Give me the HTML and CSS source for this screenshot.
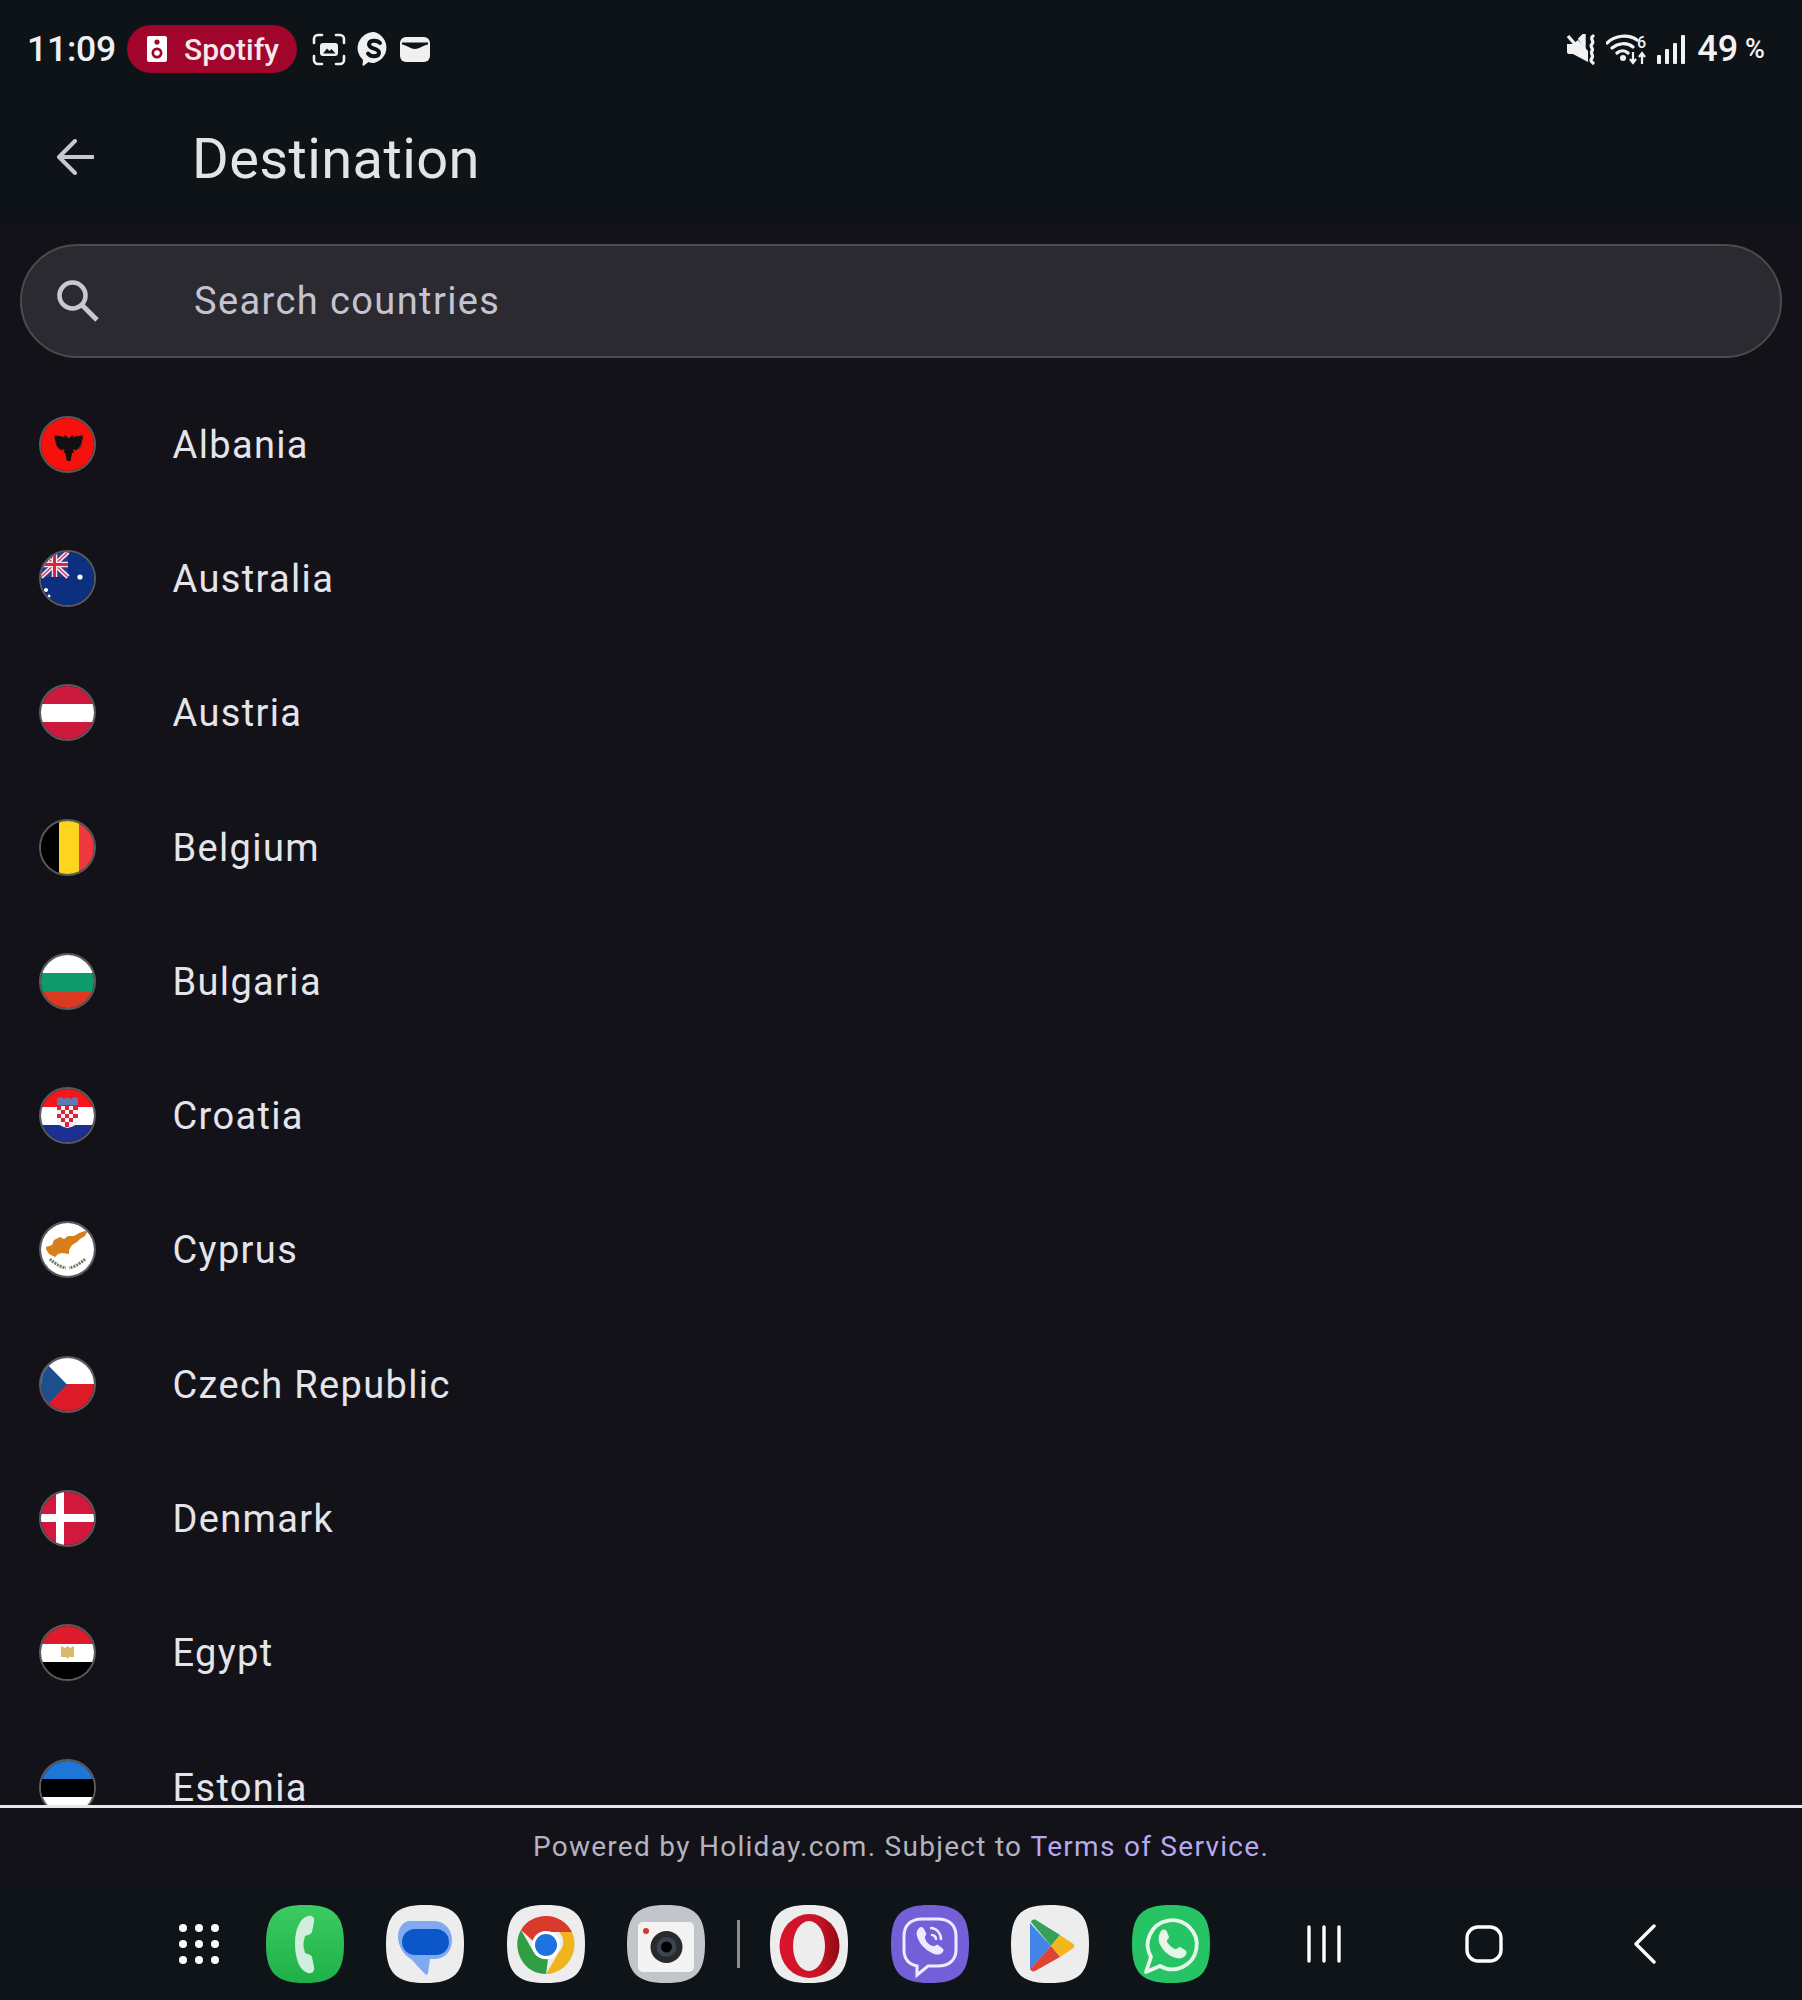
FILE: index.html
```html
<!DOCTYPE html>
<html lang="en">
<head>
<meta charset="utf-8">
<title>Destination</title>
<link rel="stylesheet" href="styles.css">
</head>
<body>
<div class="app">
  <header class="top">
    <div class="status">
      <div class="status-left">
        <span class="time">11:09</span>
        <span class="pill">
          <svg width="20" height="26" viewBox="0 0 20 26"><rect width="20" height="26" rx="2" fill="#fff"/><circle cx="10" cy="6" r="2.6" fill="#a1052c"/><circle cx="10" cy="17" r="5.5" fill="#a1052c"/><circle cx="10" cy="17" r="2.8" fill="#fff"/></svg>
          <span>Spotify</span>
        </span>
        <svg class="ic-shot" width="34" height="33" viewBox="0 0 34 33" fill="none"><path d="M2 10V6a4 4 0 0 1 4-4h4M24 2h4a4 4 0 0 1 4 4v4M32 23v4a4 4 0 0 1-4 4h-4M10 31H6a4 4 0 0 1-4-4v-4" stroke="#f0f0f0" stroke-width="2.6" stroke-linecap="round"/><rect x="8" y="10" width="18" height="13" rx="3" fill="#f0f0f0"/><path d="M11 20.500l4-5 2.500 2.500 2-2 4 4.500z" fill="#0e1318"/></svg>
        <svg class="ic-sk" width="34" height="34" viewBox="0 0 34 34"><path d="M17 0a16.500 16 0 0 1 0 31c-2 0-4-.4-5.500-1L7 33.500c-.8.500-1.600 0-1.500-1l.5-4.500A16 16 0 0 1 17 0z" fill="#f0f0f0"/><path d="M23 11C20 7.500 12 8 12 12.500c0 5 10.500 3.500 10 8.500-.4 4-8 4.500-11 .5" fill="none" stroke="#0e1318" stroke-width="4" stroke-linecap="round"/></svg>
        <svg class="ic-wal" width="30" height="25" viewBox="0 0 30 25"><rect width="30" height="25" rx="6" fill="#f0f0f0"/><path d="M2 5.500h26v2C22 9 19 12 15 12S8 9 2 7.500z" fill="#0e1318"/></svg>
      </div>
      <div class="status-right">
        <svg width="31" height="31" viewBox="0 0 31 31"><path d="M1 10h6l5-4 10 11v11L7 20H3a2 2 0 0 1-2-2z" fill="#f2f2f2"/><path d="M14 5l4-4v10zM2 2l19 22" stroke="#f2f2f2" stroke-width="3.400" fill="#f2f2f2"/><path d="M27 2c-4 3 2 5-1 8s2 4 0 7 2 4 0 7-1 3 1 5" fill="none" stroke="#f2f2f2" stroke-width="3.200" stroke-linecap="round"/></svg>
        <svg class="ic-wifi" width="42" height="31" viewBox="0 0 42 31"><path d="M1 9c8-8 22-9 30-3M6 14c6-5 15-6 21-1M11 19c3-3 8-3 11 0" fill="none" stroke="#f2f2f2" stroke-width="3.200" stroke-linecap="round"/><circle cx="17" cy="24" r="3" fill="#f2f2f2"/><path d="M27 18v10M24 25l3 4 3-4M36 30V20M33 23l3-4 3 4" fill="none" stroke="#f2f2f2" stroke-width="2.200"/><text x="31" y="14" class="six">6</text></svg>
        <svg class="ic-sig" width="28" height="29" viewBox="0 0 28 29"><rect x="0" y="20" width="4" height="9" rx="1" fill="#f2f2f2"/><rect x="8" y="14" width="4" height="15" rx="1" fill="#f2f2f2"/><rect x="16" y="8" width="4" height="21" rx="1" fill="#f2f2f2"/><rect x="24" y="0" width="4" height="29" rx="1" fill="#f2f2f2"/></svg>
        <span class="batt">49</span><span class="pct">%</span>
      </div>
    </div>
    <div class="appbar">
      <svg class="back" width="38" height="36" viewBox="0 0 38 36" fill="none"><path d="M19 2L3 18l16 16M3 18h34" stroke="#c7c9ce" stroke-width="4" stroke-linecap="round" stroke-linejoin="round"/></svg>
      <h1 class="title">Destination</h1>
    </div>
  </header>

  <main class="content">
    <div class="search">
      <svg class="search-ic" width="42" height="42" viewBox="0 0 42 42" fill="none"><circle cx="15.500" cy="15.500" r="13" stroke="#c9c7d2" stroke-width="4.600"/><path d="M25 25l15 15" stroke="#c9c7d2" stroke-width="5"/></svg>
      <span class="placeholder">Search countries</span>
    </div>

    <ul class="list">
      <li class="row"><span class="flag"><svg viewBox="0 0 53 53"><rect width="53" height="53" fill="#f8100c"/><path transform="translate(7 7) scale(.74 .78)" d="M25.500 46l-2-10-3-1 2-3-2-1-3 2-1-3-2 1-1-3-2 1 1-3-2 0 1-3-2-1 1-3-2-1 1-3-1-2 7 1 5 1 2 2-1-4 3 1 2 2 1.500 1 1.500-1 2-2 3-1-1 4 2-2 5-1 7-1-1 2 1 3-2 1 1 3-2 1 1 3-2 0 1 3-2-1-1 3-2-1-1 3-3-2-2 1 2 3-3 1-2 10z" fill="#111"/></svg></span><span class="name">Albania</span></li>
      <li class="row"><span class="flag"><svg viewBox="0 0 53 53"><rect width="53" height="53" fill="#0d2f7f"/><rect width="27" height="25" fill="#2a3a8a"/><path d="M0 0l27 25M27 0L0 25" stroke="#f4e6ee" stroke-width="4.500"/><path d="M0 0l27 25M27 0L0 25" stroke="#d8406a" stroke-width="1.500"/><path d="M13.500 0v25M0 12.500h27" stroke="#f4e6ee" stroke-width="5.500"/><path d="M13.500 0v25M0 12.500h27" stroke="#d8263f" stroke-width="3"/><circle cx="39" cy="25" r="2.600" fill="#fff"/><circle cx="5" cy="38" r="2" fill="#fff"/><circle cx="8" cy="44" r="1.500" fill="#fff"/></svg></span><span class="name">Australia</span></li>
      <li class="row"><span class="flag"><svg viewBox="0 0 53 53"><rect width="53" height="53" fill="#cd1a3c"/><rect y="18" width="53" height="18" fill="#fff"/></svg></span><span class="name">Austria</span></li>
      <li class="row"><span class="flag"><svg viewBox="0 0 53 53"><rect width="18" height="53" fill="#000"/><rect x="18" width="20" height="53" fill="#fdd41e"/><rect x="38" width="15" height="53" fill="#ee3a3f"/></svg></span><span class="name">Belgium</span></li>
      <li class="row"><span class="flag"><svg viewBox="0 0 53 53"><rect width="53" height="18" fill="#fff"/><rect y="18" width="53" height="18" fill="#0f9a6b"/><rect y="36" width="53" height="17" fill="#dc3a20"/></svg></span><span class="name">Bulgaria</span></li>
      <li class="row"><span class="flag"><svg viewBox="0 0 53 53"><rect width="53" height="18" fill="#f4161a"/><rect y="18" width="53" height="18" fill="#fff"/><rect y="36" width="53" height="17" fill="#1c2f93"/><path d="M16 9l4-1 3 2 3-2 4 2 3-2 4 1v7H16z" fill="#5e79b4"/><path d="M16 17h21v14q0 6-10.500 8Q16 37 16 31z" fill="#f6f0f0"/><path d="M16 17h4v4h-4zM24 17h4v4h-4zM32 17h5v4h-5zM20 21h4v4h-4zM28 21h4v4h-4zM16 25h4v4h-4zM24 25h4v4h-4zM32 25h5v4h-5zM20 29h4v4h-4zM28 29h4v4h-4zM24 33h4v5h-4z" fill="#d8243a"/></svg></span><span class="name">Croatia</span></li>
      <li class="row"><span class="flag"><svg viewBox="0 0 53 53"><rect width="53" height="53" fill="#fff"/><path d="M5 24l6-2 2-5 6-3 4 2 4-3 6 0 5-3 9-3-3 6-5 3-3 3-5 3-3 5 0 4-7-1-4 1-3 3-6-3-3-5z" fill="#d67f1c"/><path d="M9 36c4 4 10 8 16 9M44 36c-4 4-10 8-16 9" fill="none" stroke="#6f7a60" stroke-width="3" stroke-dasharray="2 1"/></svg></span><span class="name">Cyprus</span></li>
      <li class="row"><span class="flag"><svg viewBox="0 0 53 53"><rect width="53" height="26" fill="#fff"/><rect y="26" width="53" height="27" fill="#dc1a28"/><path d="M0 0v53l26-26.500z" fill="#1d4f8f"/></svg></span><span class="name">Czech Republic</span></li>
      <li class="row"><span class="flag"><svg viewBox="0 0 53 53"><rect width="53" height="53" fill="#d3183d"/><rect x="15" width="8" height="53" fill="#fff"/><rect y="22" width="53" height="8" fill="#fff"/></svg></span><span class="name">Denmark</span></li>
      <li class="row"><span class="flag"><svg viewBox="0 0 53 53"><rect width="53" height="18" fill="#dc1b2c"/><rect y="18" width="53" height="18" fill="#fff"/><rect y="36" width="53" height="17" fill="#000"/><path d="M20 20l4 2 2.500-2 2.500 2 4-2v11h-5l-1.500 2-1.500-2h-5z" fill="#d8bb6c"/></svg></span><span class="name">Egypt</span></li>
      <li class="row"><span class="flag"><svg viewBox="0 0 53 53"><rect width="53" height="18" fill="#1c77d6"/><rect y="18" width="53" height="18" fill="#000"/><rect y="36" width="53" height="17" fill="#fff"/></svg></span><span class="name">Estonia</span></li>
    </ul>

    <footer class="footer">Powered by Holiday.com. Subject to <span class="link">Terms of Service</span>.</footer>
  </main>

  <nav class="nav">
    <svg class="grid" width="40" height="40" viewBox="0 0 40 40" fill="#fff"><circle cx="4" cy="4" r="4"/><circle cx="20" cy="4" r="4"/><circle cx="36" cy="4" r="4"/><circle cx="4" cy="20" r="4"/><circle cx="20" cy="20" r="4"/><circle cx="36" cy="20" r="4"/><circle cx="4" cy="36" r="4"/><circle cx="20" cy="36" r="4"/><circle cx="36" cy="36" r="4"/></svg>

    <div class="dock">
      <svg class="app-ic" viewBox="0 0 78 78"><defs><linearGradient id="gp" x1="0" y1="0" x2="0" y2="1"><stop offset="0" stop-color="#3ccb62"/><stop offset="1" stop-color="#1fb049"/></linearGradient></defs><path d="M39 0C68 0 78 10 78 39S68 78 39 78 0 68 0 39 10 0 39 0z" fill="url(#gp)"/><path d="M42 11c4-1 7 1 6 6l-2 10c-1 3-5 3-7 4-2 7-2 10 0 17 2 1 6 1 7 4l2 10c1 4-2 7-6 6-8-2-13-14-13-29s5-26 13-28z" fill="#cfeedd"/></svg>
      <svg class="app-ic" viewBox="0 0 78 78"><path d="M39 0C68 0 78 10 78 39S68 78 39 78 0 68 0 39 10 0 39 0z" fill="#ededee"/><path d="M24 16h24c11 0 18 9 18 19s-6 18-16 19h-6l-2 14c-.5 2-2 2-3 1L25 54C18 50 12 41 12 32c0-9 5-16 12-16z" fill="#80a9ef"/><rect x="16" y="24" width="47" height="26" rx="13" fill="#0b57c9"/></svg>
      <svg class="app-ic" viewBox="0 0 78 78"><path d="M39 0C68 0 78 10 78 39S68 78 39 78 0 68 0 39 10 0 39 0z" fill="#ededee"/><path d="M39 11c11 0 21 6 26 16H39a14 14 0 0 0-13 9L14 25c5-9 15-14 25-14z" fill="#d93a2b"/><path d="M65 27c6 14 1 30-12 38-4 2-8 4-14 4l13-22a14 14 0 0 0 0-20z" fill="#f0b41c"/><path d="M14 25l12 21a14 14 0 0 0 15 8L39 69C29 69 19 64 14 54 9 45 9 33 14 25z" fill="#2f9e45"/><circle cx="39" cy="40" r="14" fill="#fff"/><circle cx="39" cy="40" r="11" fill="#1d73e0"/></svg>
      <svg class="app-ic" viewBox="0 0 78 78"><path d="M39 0C68 0 78 10 78 39S68 78 39 78 0 68 0 39 10 0 39 0z" fill="#c2c5c9"/><rect x="11" y="17" width="56" height="50" rx="5" fill="#f3f3f3"/><circle cx="39.500" cy="42" r="16" fill="#2a2a2e"/><circle cx="39.500" cy="42" r="10" fill="#3b4454"/><circle cx="39.500" cy="42" r="5.500" fill="#000"/><circle cx="19" cy="26" r="3" fill="#d8352d"/></svg>
      <span class="sep"></span>
      <svg class="app-ic" viewBox="0 0 78 78"><defs><linearGradient id="go" x1="0" y1="0" x2="1" y2="0"><stop offset="0" stop-color="#d9142a"/><stop offset=".65" stop-color="#c8142a"/><stop offset="1" stop-color="#8f0a12"/></linearGradient></defs><path d="M39 0C68 0 78 10 78 39S68 78 39 78 0 68 0 39 10 0 39 0z" fill="#ededee"/><ellipse cx="39.500" cy="41" rx="30" ry="32" fill="url(#go)"/><ellipse cx="39" cy="41" rx="16" ry="25" fill="#ededee"/></svg>
      <svg class="app-ic" viewBox="0 0 78 78"><path d="M39 0C68 0 78 10 78 39S68 78 39 78 0 68 0 39 10 0 39 0z" fill="#7360d8"/><path d="M31 14h16c11 0 18 6 18 17v14c0 10-7 16-18 16H37l-11 9v-9c-9-2-13-8-13-16V31c0-11 7-17 18-17z" fill="none" stroke="#efeaff" stroke-width="3"/><path d="M28 23c2-2 4-1 5 1l2 4c1 2-2 3-1 5 1 4 4 7 8 8 2 1 3-2 5-1l4 3c2 1 2 3 0 5-3 2-6 2-10 0-8-4-13-10-15-17-1-3 0-6 2-8z" fill="#efeaff"/><path d="M40 23c5 0 10 5 10 11M41 30c2 0 4 2 4 4" fill="none" stroke="#efeaff" stroke-width="2.500" stroke-linecap="round"/></svg>
      <svg class="app-ic" viewBox="0 0 78 78"><path d="M39 0C68 0 78 10 78 39S68 78 39 78 0 68 0 39 10 0 39 0z" fill="#ededee"/><path d="M20 17c0-2 3-3 5-2l24 15-9 11z" fill="#34a05a"/><path d="M19 18v46l21-23z" fill="#4285e6"/><path d="M49 30l12 8c3 2 3 4 0 6l-12 8-9-11z" fill="#f3b71d"/><path d="M19 64c1 2 3 3 5 2l25-14-9-11z" fill="#de4335"/></svg>
      <svg class="app-ic" viewBox="0 0 78 78"><path d="M39 0C68 0 78 10 78 39S68 78 39 78 0 68 0 39 10 0 39 0z" fill="#26c464"/><path d="M14 67l5-15a24.500 24.500 0 1 1 9 9z" fill="none" stroke="#e6f7ea" stroke-width="3.800" stroke-linejoin="round"/><path d="M29 26c2-2 5-2 6 1l2 5c0 2-3 3-2 5 2 3 5 6 8 7 2 1 3-2 5-2l5 3c2 1 2 4 0 6-3 3-7 3-12 1-7-3-12-9-14-15-1-4 0-8 2-11z" fill="#e6f7ea"/></svg>
    </div>

    <div class="softkeys">
      <svg class="k-recent" width="34" height="38" viewBox="0 0 34 38" stroke="#fff" stroke-width="3.400" stroke-linecap="round"><path d="M2 2v34M17 2v34M32 2v34"/></svg>
      <svg class="k-home" width="38" height="38" viewBox="0 0 38 38"><rect x="2" y="2" width="34" height="34" rx="11" fill="none" stroke="#fff" stroke-width="3.400"/></svg>
      <svg class="k-back" width="22" height="40" viewBox="0 0 22 40"><path d="M20 2L2 20l18 18" fill="none" stroke="#fff" stroke-width="3.400" stroke-linecap="round" stroke-linejoin="round"/></svg>
    </div>
  </nav>
</div>
</body>
</html>
```

FILE: styles.css
```css
* { box-sizing: border-box; }
html, body { margin: 0; padding: 0; background: #0e1318; }
body { font-family: Roboto, "Noto Sans", sans-serif; }

.app { width: 1802px; height: 2000px; display: flex; flex-direction: column; overflow: hidden; }

.top { background: #0e1318; height: 222px; flex: none; }

.status { height: 98px; display: flex; align-items: center; justify-content: space-between; padding: 0 37px 0 27px; color: #f2f2f2; }
.status-left, .status-right { display: flex; align-items: center; }
.time { font-size: 35.5px; font-weight: 500; color: #eef0f2; width: 100px; letter-spacing: -.2px; }
.pill { width: 170px; height: 48px; border-radius: 24px; background: #a1052c; display: flex; align-items: center; padding-left: 20px; color: #f7e8ec; font-size: 30px; font-weight: 500; gap: 17px; }
.ic-shot { margin-left: 15px; }
.ic-sk { margin-left: 11px; }
.ic-wal { margin-left: 9px; }
.ic-wifi { margin-left: 9px; }
.ic-sig { margin-left: 9px; }
.six { font: 500 16px Roboto, sans-serif; fill: #f2f2f2; }
.batt { font-size: 36px; font-weight: 500; margin-left: 12px; }
.pct { font-size: 27px; font-weight: 500; margin-left: 7px; }

.appbar { height: 124px; display: flex; align-items: flex-start; padding-left: 56px; }
.back { margin-top: 41px; }
.title { margin: 23px 0 0 98px; font-size: 56px; line-height: 76px; font-weight: 400; color: #e3e4e8; letter-spacing: .4px; }

.content { flex: 1; min-height: 0; display: flex; flex-direction: column; background: #121218; padding-top: 22px; }

.search { margin: 0 20px; height: 114px; flex: none; border: 2px solid #4a4a50; border-radius: 57px; background: #2a2a30; display: flex; align-items: center; padding-left: 35px; }
.search-ic { flex: none; }
.placeholder { margin-left: 95px; font-size: 38px; letter-spacing: 1.4px; color: #c5c3d0; }

.list { list-style: none; margin: 19px 0 0; padding: 0; flex: 1; min-height: 0; overflow: hidden; border-bottom: 3px solid #e6e6ea; }
.row { height: 134.3px; display: flex; align-items: center; padding-left: 38.5px; }
.flag { width: 57px; height: 57px; flex: none; border-radius: 50%; border: 2px solid #5a5a5e; overflow: hidden; display: block; }
.flag svg { display: block; width: 100%; height: 100%; }
.name { margin-left: 77px; padding-top: 1px; font-size: 38px; letter-spacing: 1.35px; color: #e4e4ea; }

.footer { flex: none; height: 76px; margin-bottom: 2px; display: flex; align-items: center; justify-content: center; white-space: pre-wrap; font-size: 28px; letter-spacing: 1.28px; color: #b5b3c0; }
.link { color: #b7a9ef; }

.nav { flex: none; height: 114px; background: #0e1418; display: flex; align-items: center; padding: 2px 0 0 179px; }
.grid { flex: none; }
.dock { display: flex; align-items: center; gap: 42.5px; margin-left: 46.5px; }
.app-ic { width: 78px; height: 78px; flex: none; display: block; }
.sep { width: 3px; height: 48px; background: #8a8c90; margin: 0 -12px 0 -11px; }
.softkeys { display: flex; align-items: center; margin-left: 97px; }
.k-home { margin-left: 124px; }
.k-back { margin-left: 131px; }
```
